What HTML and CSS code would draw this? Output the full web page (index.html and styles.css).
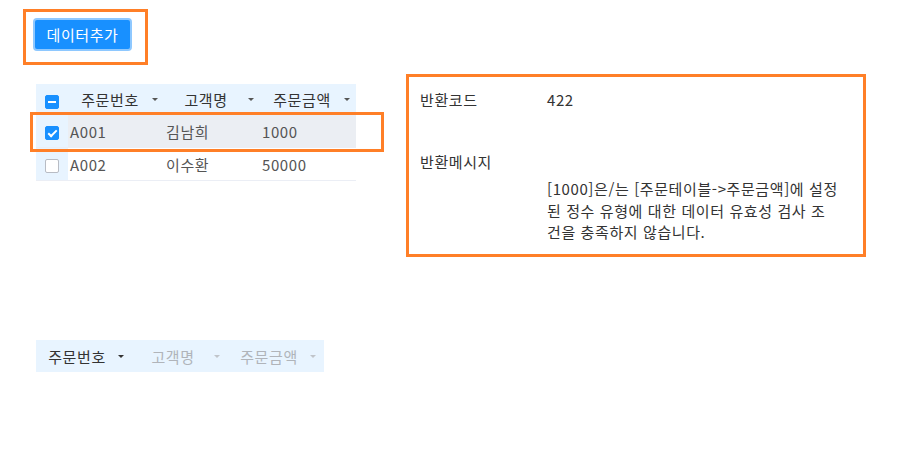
FILE: index.html
```html
<!DOCTYPE html>
<html lang="ko">
<head>
    <meta charset="UTF-8">
    <meta name="viewport" content="width=device-width, initial-scale=1.0">
    <title>주문 데이터</title>
    <link rel="stylesheet" href="styles.css">
</head>
<body>
    <div class="page">
        <div class="mark mark-btn">
            <button type="button" class="btn-primary">데이터추가</button>
        </div>

        <div class="main">
            <div class="grid-wrap">
                <table class="grid">
                    <thead>
                        <tr>
                            <th class="col-check"><span class="checkbox indeterminate"></span></th>
                            <th><div class="head-cell"><span class="head-text">주문번호</span><span class="caret"></span></div></th>
                            <th><div class="head-cell"><span class="head-text">고객명</span><span class="caret"></span></div></th>
                            <th><div class="head-cell"><span class="head-text">주문금액</span><span class="caret"></span></div></th>
                        </tr>
                    </thead>
                    <tbody>
                        <tr class="selected">
                            <td class="col-check"><span class="checkbox checked"></span></td>
                            <td>A001</td>
                            <td>김남희</td>
                            <td>1000</td>
                        </tr>
                        <tr>
                            <td class="col-check"><span class="checkbox"></span></td>
                            <td>A002</td>
                            <td>이수환</td>
                            <td>50000</td>
                        </tr>
                    </tbody>
                </table>
                <!-- highlight around the selected row -->
                <div class="mark mark-row"></div>
            </div>

            <div class="mark result">
                <div class="result-row">
                    <div class="result-label">반환코드</div>
                    <div class="result-value">422</div>
                </div>
                <div class="result-row result-msg">
                    <div class="result-label">반환메시지</div>
                    <div class="result-value msg-text">[1000]은/는 [주문테이블-&gt;주문금액]에 설정된 정수 유형에 대한 데이터 유효성 검사 조건을 충족하지 않습니다.</div>
                </div>
            </div>
        </div>

        <div class="sort-bar">
            <div class="sort-item active"><span class="head-text">주문번호</span><span class="caret"></span></div>
            <div class="sort-item"><span class="head-text">고객명</span><span class="caret"></span></div>
            <div class="sort-item"><span class="head-text">주문금액</span><span class="caret"></span></div>
        </div>
    </div>
</body>
</html>
```

FILE: styles.css
```css
body {
    margin: 0;
    padding: 0;
    font-family: "Noto Sans CJK KR", "Noto Sans", sans-serif;
    font-size: 15px;
    letter-spacing: 0.6px;
    color: #333333;
    background: #ffffff;
}

.mark {
    border: 3px solid #ff7f27;
    box-sizing: border-box;
}

.mark-btn {
    width: 125px;
    height: 56px;
    margin: 9px 0 0 23px;
    padding: 6px 0 0 7px;
}

.btn-primary {
    display: block;
    width: 99px;
    height: 33px;
    background: #1890ff;
    border: 2px solid #8ec8ff;
    border-radius: 4px;
    color: #ffffff;
    font-family: inherit;
    font-size: 15px;
    letter-spacing: 0.6px;
    padding: 0;
    cursor: pointer;
}

.main {
    display: flex;
    align-items: flex-start;
    margin-top: 9px;
}

.grid-wrap {
    position: relative;
    margin: 10px 0 0 36px;
}

.grid {
    border-collapse: collapse;
    width: 320px;
    table-layout: fixed;
}

.grid th {
    background: #e8f4ff;
    height: 31px;
    padding: 0;
    font-weight: normal;
    color: #333333;
    width: 96px;
}

.grid th.col-check,
.grid td.col-check {
    width: 32px;
    background: #e8f4ff;
    text-align: center;
    padding: 0;
}

.grid td {
    height: 32px;
    padding: 0 0 0 2px;
    border-bottom: 1px solid #ebeef5;
    color: #555555;
}

.grid tr.selected td {
    background: #ebeef3;
}

.grid tr.selected td.col-check {
    background: #e8f4ff;
}

.head-cell {
    display: flex;
    align-items: center;
    padding-right: 6px;
}

.head-text {
    flex: 1;
    text-align: center;
}

.caret {
    width: 0;
    height: 0;
    border-left: 3px solid transparent;
    border-right: 3px solid transparent;
    border-top: 3px solid #555555;
}

.checkbox {
    display: inline-block;
    position: relative;
    width: 14px;
    height: 14px;
    box-sizing: border-box;
    border: 1px solid #b8bcc4;
    border-radius: 2px;
    background: #ffffff;
    vertical-align: middle;
}

.checkbox.checked,
.checkbox.indeterminate {
    background: #1890ff;
    border-color: #1890ff;
}

.checkbox.indeterminate::after {
    content: "";
    position: absolute;
    left: 2px;
    right: 2px;
    top: 5px;
    height: 2px;
    background: #ffffff;
}

.checkbox.checked::after {
    content: "";
    position: absolute;
    left: 4px;
    top: 1px;
    width: 3px;
    height: 7px;
    border: solid #ffffff;
    border-width: 0 2px 2px 0;
    transform: rotate(45deg);
}

.mark-row {
    position: absolute;
    left: -6px;
    top: 28px;
    width: 354px;
    height: 40px;
}

.result {
    width: 460px;
    height: 183px;
    margin-left: 50px;
    padding: 12px 0 0 11px;
}

.result-row {
    display: flex;
    line-height: 21px;
}

.result-label {
    width: 127px;
    flex-shrink: 0;
}

.result-msg {
    margin-top: 41px;
}

.msg-text {
    width: 291px;
    margin-top: 27px;
    line-height: 21.5px;
}

.sort-bar {
    display: flex;
    width: 288px;
    height: 32px;
    margin: 83px 0 0 36px;
    background: #e8f4ff;
}

.sort-item {
    width: 96px;
    display: flex;
    align-items: center;
    padding-right: 8px;
    box-sizing: border-box;
    color: #b0b4ba;
}

.sort-item .caret {
    border-top-color: #c0c4ca;
}

.sort-item.active {
    color: #333333;
}

.sort-item.active .caret {
    border-top-color: #333333;
}
```
